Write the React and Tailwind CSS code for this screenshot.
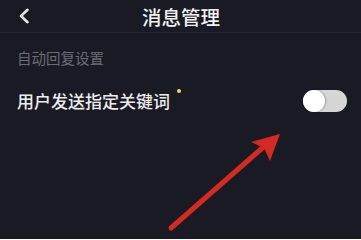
export default function App() {
  return (
    <div
      className="relative w-[361px] h-[239px] overflow-hidden bg-[#191a23] text-white"
      style={{ fontFamily: '"Noto Sans CJK SC", "Noto Sans", sans-serif' }}
    >
      {/* header */}
      <div className="relative h-[33px] flex items-center justify-center border-b border-[#262733]">
        <svg className="absolute left-[18px] top-[8px]" width="12" height="16" viewBox="0 0 12 16">
          <path d="M9.5 1.8 L3 8 L9.5 14.2" fill="none" stroke="#e6e6e6" strokeWidth="2.6" strokeLinecap="round" strokeLinejoin="round" />
        </svg>
        <span className="text-[19.5px] leading-none font-medium text-[#f2f2f2] ml-[1px] mt-[1px]">消息管理</span>
      </div>

      <div className="px-[17px]">
        <div className="pt-[18px] text-[14.5px] leading-none text-[#6a6c76]">自动回复设置</div>
        <div className="mt-[24px] flex items-center justify-between">
          <div className="flex items-start">
            <span className="text-[17px] leading-none font-medium text-[#ededed]">用户发送指定关键词</span>
            <span className="ml-[7px] mt-[-3px] w-[4px] h-[4px] rounded-full bg-[#eed868]" />
          </div>
          <div className="mr-[-3px] w-[44px] h-[22px] rounded-full bg-[#d6d6d6] flex items-center">
            <div className="w-[22px] h-[22px] rounded-full bg-white shadow-[1px_0_2px_rgba(0,0,0,0.25)]" />
          </div>
        </div>
      </div>

      {/* annotation arrow */}
      <svg className="absolute left-0 top-0" width="361" height="239" viewBox="0 0 361 239">
        <line x1="171" y1="228" x2="268" y2="143" stroke="#d42a22" strokeWidth="5" strokeLinecap="round" />
        <path d="M280 134 L251 142 L264 148 L270 161 Z" fill="#d42a22" />
      </svg>
    </div>
  );
}
